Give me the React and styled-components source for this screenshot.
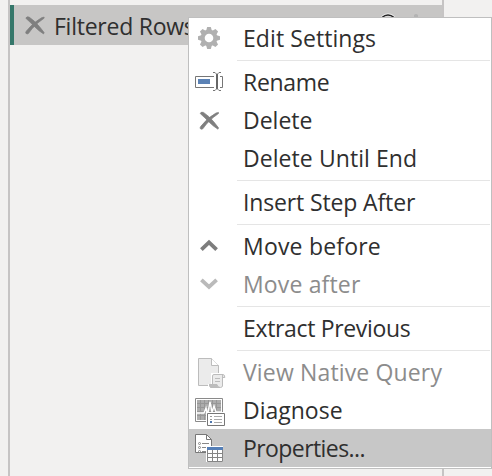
import React from 'react';
import styled, { createGlobalStyle } from 'styled-components';

const GlobalStyle = createGlobalStyle`
  * { box-sizing: border-box; }
  html, body { margin: 0; background: #f2f1f0; overflow: hidden; }
  body { font-family: "Open Sans", "Noto Sans", sans-serif; font-size: 23px; color: #2f2f2f; }
`;

const Page = styled.main`
  position: relative;
  width: 492px;
  height: 476px;
  background: #f2f1f0;
  overflow: hidden;
`;

const StepsPane = styled.section`
  width: 436px;
  height: 476px;
  margin-left: 8px;
  padding-top: 5px;
  border: solid #c6c4c4;
  border-width: 0 2px;
`;

const Step = styled.div`
  display: flex;
  align-items: center;
  height: 40px;
  background: #c7c6c5;
  border-left: 4px solid #35776a;
`;

const StepIcon = styled.svg`
  flex: none;
  width: 40px;
  height: 40px;
`;

const StepName = styled.span`
  flex: 1;
  line-height: 40px;
  padding-top: 2px;
  white-space: nowrap;
  letter-spacing: ${(p) => p.$spacing}px;
`;

const StepActions = styled.svg`
  flex: none;
  width: 72px;
  height: 40px;
`;

const Menu = styled.div`
  position: absolute;
  left: 188px;
  top: 17px;
  width: 304px;
  height: 452px;
  padding: 1px 0;
  background: #fff;
  border: 1px solid #bfbfbf;
`;

const Item = styled.div`
  display: flex;
  height: 38px;
  background: ${(p) => (p.$selected ? '#c7c7c7' : 'transparent')};
  color: ${(p) => (p.$disabled ? '#8c8c8c' : '#2f2f2f')};
`;

const IconCell = styled.svg`
  flex: none;
  width: 48px;
  height: 38px;
`;

const Label = styled.span`
  padding-left: 6px;
  line-height: 39px;
  white-space: nowrap;
  letter-spacing: ${(p) => p.$spacing}px;
`;

const Separator = styled.div`
  height: 1px;
  margin: 3px 1px 2px 48px;
  background: #e5e5e5;
`;

const Cross = () => (
  <g fill="#7f7f7f" stroke="#7f7f7f" strokeWidth="0.7" strokeLinejoin="round">
    <path d="M11.2 12.5Q12 10.5 14.5 11.4Q20 15 24.6 20.6L29.5 26.8L29 28.2Q24.5 25.5 20.5 21.5Q16 16.8 11.2 12.5Z" />
    <path d="M29.5 11.4V12.5Q22.5 17 17.5 23L13.8 27.8Q12.6 28.9 11.2 27.5Q10.9 26.5 11.8 25.3Q18.5 16.7 27 12Z" />
  </g>
);

const Gear = () => (
  <g>
    <g fill="#b0b0b0">
      {[0, 45, 90, 135].map((a) => (
        <path key={a} transform={`rotate(${a} 20 19)`} d="M17 12L18.2 8H21.8L23 12V26L21.8 30H18.2L17 26Z" />
      ))}
    </g>
    <circle cx="20" cy="19" r="6.3" fill="none" stroke="#b0b0b0" strokeWidth="4" />
    <circle cx="20" cy="19" r="4.3" fill="#fff" />
  </g>
);

const RenameIcon = () => (
  <g fill="none" stroke="#767676">
    <path d="M25 13.5H6.5V24.5H25M31 13.5H33.5V24.5H31" />
    <path d="M9 16H21V21H9Z" fill="#5b82b5" stroke="none" />
    <path d="M28 11V26" strokeWidth="2" stroke="#666" />
    <path d="M24 9.5H26L28 11.5L30 9.5H32M24 27.5H26L28 25.5L30 27.5H32" />
  </g>
);

const Chevron = ({ down }) => (
  <path
    d={down ? 'M12.4 14.8L20 22L27.6 14.8' : 'M12.4 22.6L20 15.4L27.6 22.6'}
    fill="none"
    stroke={down ? '#bababa' : '#7d7d7d'}
    strokeWidth="3.8"
  />
);

const NativeQueryIcon = () => (
  <g stroke="#bcbcbc" fill="#ebebeb">
    <path d="M9.5 5.5H22.5L29.5 12.5V32.5H9.5Z" />
    <path d="M22.5 5.5V12.5H29.5" fill="#fff" />
    <path d="M22 20H38V25H34V36H19V31H22Z" fill="#fff" stroke="none" />
    <path d="M23.5 31V23Q23.5 21.5 25 21.5H34Q35.8 21.5 35.8 24.5H33.5V33Q33 34.5 31.5 34.5H22Q20.5 34 20.5 31.5H28" />
    <path d="M20.5 31.5H28Q28 34 31 34.5H22Q20.5 34 20.5 31.5Z" fill="#bdbdbd" />
    <path d="M33.5 25V22M26 25.5H31M26 28.5H31" />
  </g>
);

const DiagnoseIcon = () => (
  <g>
    <path d="M6.5 7.5H33.5V30.5H6.5Z" fill="#fff" stroke="#8a8a8a" />
    <path d="M8 9H32V29H8Z" fill="#acacac" />
    <path
      d="M11.5 9V29M15.5 9V29M19.5 9V29M23.5 9V29M27.5 9V29M8 12.5H32M8 16.5H32M8 20.5H32M8 24.5H32"
      stroke="#979797"
    />
    <path d="M8 22H15L17 17L18.5 24L21 11L23 21L25 15L27 21H32" fill="none" stroke="#fff" strokeWidth="1.4" />
    <path d="M17 21H37V36H17Z" fill="#fff" />
    <path d="M18.5 22.5H35.5V34.5H18.5Z" fill="#fff" stroke="#777" />
    <path d="M25 25.5H33M25 28.5H33M25 31.5H33" stroke="#aaa" />
    <path d="M21 25H23V26H21ZM21 28H23V29H21Z" fill="#999" />
    <path d="M21 30H23V32H21Z" fill="#4f77ad" />
  </g>
);

const PropertiesIcon = () => (
  <g>
    <path d="M6.5 5.5H17.5L22.5 10.5V23.5H6.5Z" fill="#fff" stroke="#777" />
    <path d="M17.5 5.5V10.5H22.5" fill="none" stroke="#777" />
    <g fill="none" stroke="#888">
      <circle cx="10.5" cy="14.5" r="1" />
      <circle cx="10.5" cy="18.5" r="1" />
      <circle cx="10.5" cy="22.5" r="1" />
      <path d="M13 14.5H20M13 18.5H18M13 22.5H18" />
    </g>
    <path d="M17 17H34V33H17Z" fill="#fff" />
    <path d="M18.5 18.5H33.5V32.5H18.5ZM23.5 21V33M28.5 21V33M18 24.5H34M18 28.5H34" fill="none" stroke="#858585" />
    <path d="M18 18H34V21H18Z" fill="#557fb7" />
  </g>
);

const groups = [
  [{ text: 'Edit Settings', icon: <Gear />, spacing: 0.08 }],
  [
    { text: 'Rename', icon: <RenameIcon />, spacing: -0.3 },
    { text: 'Delete', icon: <Cross />, spacing: 0 },
    { text: 'Delete Until End', spacing: 0.07 },
  ],
  [{ text: 'Insert Step After', spacing: -0.14 }],
  [
    { text: 'Move before', icon: <Chevron />, spacing: 0.2 },
    { text: 'Move after', icon: <Chevron down />, disabled: true, spacing: 0.15 },
  ],
  [{ text: 'Extract Previous', spacing: -0.34 }],
  [
    { text: 'View Native Query', icon: <NativeQueryIcon />, disabled: true, spacing: 0.15 },
    { text: 'Diagnose', icon: <DiagnoseIcon />, spacing: 0 },
    { text: 'Properties...', icon: <PropertiesIcon />, selected: true, spacing: -0.58 },
  ],
];

export default function App() {
  return (
    <Page>
      <GlobalStyle />
      <StepsPane>
        <Step>
          <StepIcon viewBox="-0.6 -0.7 40 40"><Cross /></StepIcon>
          <StepName $spacing={-0.25}>Filtered Rows</StepName>
          <StepActions viewBox="0 0 72 40">
            <circle cx="18" cy="18" r="8.2" fill="none" stroke="#e9e9e9" strokeWidth="3" />
            <circle cx="18" cy="18" r="8" fill="none" stroke="#222" strokeWidth="1.5" />
            <path d="M44 13V10Q46 8 48 10V13Z" fill="#b3b3b3" />
          </StepActions>
        </Step>
      </StepsPane>
      <Menu>
        {groups.map((items, i) => (
          <React.Fragment key={i}>
            {i > 0 && <Separator />}
            {items.map((item) => (
              <Item key={item.text} $selected={item.selected} $disabled={item.disabled}>
                <IconCell viewBox="0 0 48 38">{item.icon}</IconCell>
                <Label $spacing={item.spacing}>{item.text}</Label>
              </Item>
            ))}
          </React.Fragment>
        ))}
      </Menu>
    </Page>
  );
}
